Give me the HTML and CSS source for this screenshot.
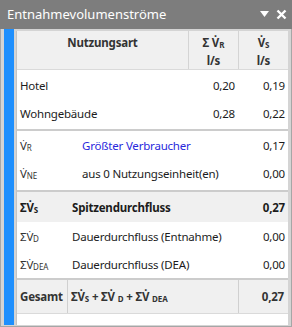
FILE: index.html
```html
<!DOCTYPE html>
<html lang="de">
<head>
    <meta charset="UTF-8">
    <title>Entnahmevolumenströme</title>
    <link rel="stylesheet" href="styles.css">
</head>
<body>
    <div class="window">
        <div class="titlebar">
            <span class="title">Entnahmevolumenströme</span>
            <div class="title-icons">
                <svg width="9" height="7" viewBox="0 0 9 7"><polygon points="0,0 9,0 4.5,6" fill="#fff"/></svg>
                <svg width="11" height="11" viewBox="0 0 11 11"><path d="M1.5 1.5 L9.5 9.5 M9.5 1.5 L1.5 9.5" stroke="#fff" stroke-width="2.4"/></svg>
            </div>
        </div>
        <div class="body">
            <div class="stripe"></div>
            <div class="panel">
                <div class="head">
                    <div class="hcell">Nutzungsart</div>
                    <div class="hcell">Σ V̇<span class="sub">R</span><br>l/s</div>
                    <div class="hcell">V̇<span class="sub">S</span><br>l/s</div>
                </div>

                <div class="group uses">
                    <div class="row">
                        <span class="name">Hotel</span>
                        <span class="num">0,20</span>
                        <span class="num">0,19</span>
                    </div>
                    <div class="row">
                        <span class="name">Wohngebäude</span>
                        <span class="num">0,28</span>
                        <span class="num">0,22</span>
                    </div>
                </div>

                <div class="group extra">
                    <div class="row">
                        <span class="sym">V̇<span class="sub">R</span></span>
                        <span class="desc indent link">Größter Verbraucher</span>
                        <span class="num">0,17</span>
                    </div>
                    <div class="row">
                        <span class="sym">V̇<span class="sub">NE</span></span>
                        <span class="desc indent">aus 0 Nutzungseinheit(en)</span>
                        <span class="num">0,00</span>
                    </div>
                </div>

                <div class="group">
                    <div class="row peak">
                        <span class="sym">ΣV̇<span class="sub">S</span></span>
                        <span class="desc">Spitzendurchfluss</span>
                        <span class="num">0,27</span>
                    </div>
                    <div class="row">
                        <span class="sym">ΣV̇<span class="sub">D</span></span>
                        <span class="desc">Dauerdurchfluss (Entnahme)</span>
                        <span class="num">0,00</span>
                    </div>
                    <div class="row">
                        <span class="sym">ΣV̇<span class="sub">DEA</span></span>
                        <span class="desc">Dauerdurchfluss (DEA)</span>
                        <span class="num">0,00</span>
                    </div>
                </div>

                <div class="total">
                    <div class="tcell">Gesamt</div>
                    <div class="tcell"><span>ΣV̇<span class="sub">S</span> + ΣV̇ <span class="sub">D</span> + ΣV̇ <span class="sub">DEA</span></span></div>
                    <div class="tcell num">0,27</div>
                </div>
            </div>
        </div>
    </div>
</body>
</html>
```

FILE: styles.css
```css
body {
    margin: 0;
    background-color: #ffffff;
    font-family: "Noto Sans", "Open Sans", sans-serif;
    font-size: 11.5px;
    letter-spacing: -0.2px;
    color: #1c1c1c;
}
.window {
    width: 292px;
    height: 327px;
    box-sizing: border-box;
    background-color: #d4d4d4;
    border: 1px solid #a6a6a6;
    border-top: none;
    display: flex;
    flex-direction: column;
}
.titlebar {
    height: 29px;
    background-color: #7d7d7d;
    display: flex;
    align-items: center;
    justify-content: space-between;
    padding: 0 5px 0 7px;
    margin: 0 -1px;
}
.title {
    color: #ffffff;
    font-size: 13px;
    letter-spacing: 0;
    padding-bottom: 2px;
}
.title-icons {
    display: flex;
    align-items: center;
    gap: 7px;
}
.body {
    flex: 1;
    display: flex;
    padding: 0 3px 1px 3px;
}
.stripe {
    width: 10px;
    background-color: #1e8ffd;
}
.panel {
    flex: 1;
    margin: 2px 0 0 2px;
    background-color: #ffffff;
    border-left: 1px solid #c4c4c4;
}
.head {
    display: grid;
    grid-template-columns: 171px 50px 50px;
    height: 38px;
    background-color: #f0f0f0;
    border-bottom: 1px solid #dadada;
}
.hcell {
    font-weight: bold;
    color: #333333;
    text-align: center;
    line-height: 16px;
    padding-top: 4px;
    border-left: 1px solid #d4d4d4;
}
.hcell:first-child {
    border-left: none;
}
.sub {
    font-size: 8px;
    letter-spacing: 0;
    vertical-align: -1px;
}
.group {
    border-bottom: 2px solid #cccccc;
}
.uses {
    padding: 2px 0 2px;
    margin-top: -1px;
}
.extra {
    padding-bottom: 3px;
}
.uses .row {
    grid-template-columns: 171px 50px 50px;
}
.row {
    display: grid;
    grid-template-columns: 55px 166px 50px;
    height: 28px;
    align-items: center;
}
.row .name,
.row .sym {
    padding-left: 3px;
}
.sym {
    color: #333333;
}
.desc.indent {
    padding-left: 10px;
}
.link {
    color: #2929dc;
}
.num {
    text-align: right;
    padding-right: 3px;
}
.peak {
    height: 30px;
    background-color: #f0f0f0;
    font-weight: bold;
}
.peak .sym {
    color: #1c1c1c;
}
.total {
    display: grid;
    grid-template-columns: 50px 171px 50px;
    height: 33px;
    background-color: #f0f0f0;
    border-bottom: 1px solid #dadada;
    font-weight: bold;
    color: #333333;
}
.tcell {
    display: flex;
    align-items: center;
    padding-left: 3px;
    border-left: 1px solid #d0d0d0;
}
.tcell:first-child {
    border-left: none;
}
.tcell.num {
    justify-content: flex-end;
    padding-right: 4px;
}
```
